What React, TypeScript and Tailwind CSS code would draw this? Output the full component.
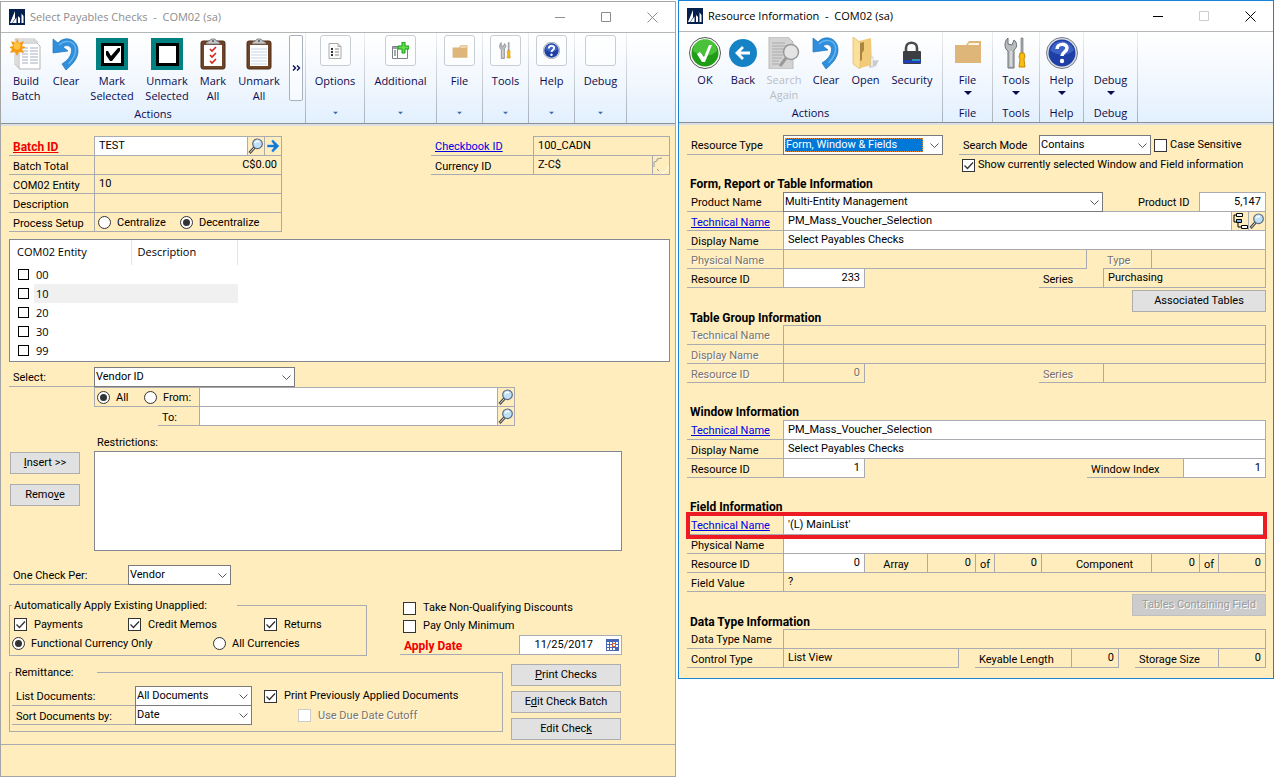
import type { ReactNode } from "react"
import clsx from "clsx"

const ENTITIES = ["00", "10", "20", "30", "99"]

/* ---------- icons ---------- */

function LogoIcon() {
  return (
    <svg width="16" height="16" viewBox="0 0 16 16" aria-hidden="true">
      <rect width="16" height="16" fill="#04204f" />
      <path d="M1 14L6 2v7.500L3 14zM3.500 14L7.500 8.500V14z" fill="#fff" />
      <path d="M9 14V7l2 2v5zM12.500 14V4.500L14.500 7v7z" fill="#fff" />
    </svg>
  )
}

function BuildIcon() {
  return (
    <svg width="32" height="32" viewBox="0 0 32 32" aria-hidden="true">
      <path d="M5 1h20v26H5z" fill="#f4f4f4" stroke="#c4c4c4" />
      <path d="M7 3h20v26H7z" fill="#f7f7f7" stroke="#c4c4c4" />
      <path d="M9 5h18l3 3v23H9z" fill="#fff" stroke="#b5b5b5" />
      <path d="M12 10h6M12 13h6M12 16h6M12 19h6M12 22h6M12 25h6M20 10h8M20 13h8M20 16h8M20 19h8M20 22h8M20 25h8" stroke="#a5afbf" />
      <path d="M7 0l2 5 5-2-2 5 4 1-4 2 2 4-5-1-2 4-2-4-5 1 2-4-3-2 4-1-2-5 5 2z" fill="#f59a12" />
      <circle cx="7" cy="8" r="3.500" fill="#ffc340" />
    </svg>
  )
}

function UndoIcon() {
  return (
    <svg width="32" height="32" viewBox="0 0 32 32" aria-hidden="true">
      <path d="M3 1v14l15-2-5-4c4-3 9-1 8.500 4-.5 6-5 10-9.500 13l4 6c7-6 12-12 12-19C28 1 15-3 8 5z" fill="#2f8fdc" stroke="#1d76bd" strokeWidth=".7" />
      <path d="M9 7c6-6 15-4 16.500 3 .8 6-2 11-7 16" fill="none" stroke="#7cc3f4" strokeWidth="1.500" opacity=".7" />
    </svg>
  )
}

function MarkIcon({ checked }: { checked?: boolean }) {
  return (
    <svg width="32" height="32" viewBox="0 0 32 32" aria-hidden="true">
      <path d="M0 0h32v32H0z" fill="#008080" />
      <path d="M6.500 6.500h20v20h-20z" fill="#fff" stroke="#000" strokeWidth="3" />
      {checked && <path d="M10 13l2 0 3 5 7-8 2 0v3l-8 10h-2l-4-6z" fill="#000" />}
    </svg>
  )
}

function ClipboardIcon({ checked }: { checked?: boolean }) {
  return (
    <svg width="26" height="32" viewBox="0 0 26 32" aria-hidden="true">
      <rect x="1" y="3" width="24" height="28" rx="2" fill="#6e4326" stroke="#4c2c16" />
      <path d="M4 7h18v21H4z" fill="#fff" />
      {checked ? (
        <path d="M10 11l2 2 4-4M10 17l2 2 4-4M10 23l2 2 4-4" fill="none" stroke="#d2271e" strokeWidth="1.600" />
      ) : (
        <path d="M5 11h16M5 14h16M5 17h16M5 20h16M5 23h16M5 26h16" stroke="#c5d6e6" />
      )}
      <path d="M6 6c0-3 4-2 5-5h4c1 3 5 2 5 5z" fill="#c3c5c8" stroke="#777" strokeWidth=".8" />
      <circle cx="13" cy="3" r="1" fill="#555" />
    </svg>
  )
}

function OptionsIcon() {
  return (
    <svg width="16" height="16" viewBox="0 0 16 16" aria-hidden="true">
      <path d="M2 .5h9l3 3v12H2z" fill="#fafafa" stroke="#aaa" />
      <path d="M11 .5v3h3" fill="none" stroke="#aaa" />
      <path d="M4 5h2v2H4zM4 8h2v2H4zM4 11h2v2H4z" fill="#333" />
      <path d="M8 6h4M8 9h4M8 12h4" stroke="#888" />
    </svg>
  )
}

function AdditionalIcon() {
  return (
    <svg width="17" height="17" viewBox="0 0 17 17" aria-hidden="true">
      <path d="M.5 4.500h15v12H.5z" fill="#fff" stroke="#7b8289" />
      <path d="M1 5h10v2H1z" fill="#9aa3aa" />
      <path d="M5.500 7v9" stroke="#7b8289" />
      <path d="M2 9h2M2 11h2M2 13h2" stroke="#555" />
      <path d="M10 0h3v4h4v3h-4v4h-3V7H6V4h4z" fill="#5fe04a" stroke="#159a14" />
    </svg>
  )
}

function FolderIcon({ size }: { size: number }) {
  return (
    <svg width={size} height={size} viewBox="0 0 28 28" aria-hidden="true">
      <path d="M1 8h11l3-4h12v22H1z" fill="#deb679" />
      <path d="M15 6h10v2H14z" fill="#fff5e3" />
    </svg>
  )
}

function ToolsIcon({ size }: { size: number }) {
  return (
    <svg width={size} height={size} viewBox="0 0 32 32" aria-hidden="true">
      <path d="M8 1L8 7 12 8 14 3c3 2 4 7 0 10v18H8V14C4 12 4 4 8 1z" fill="#b9bcbe" stroke="#6b6e70" />
      <path d="M11 14v15" stroke="#f3f3f3" />
      <path d="M21 1h2v15h-2z" fill="#a9acaf" stroke="#777" strokeWidth=".7" />
      <path d="M20 16h4l1 4-1 2 1 8h-6l1-8-1-2z" fill="#f7bd13" stroke="#c98a00" />
    </svg>
  )
}

function HelpIcon({ size }: { size: number }) {
  return (
    <svg width={size} height={size} viewBox="0 0 32 32" aria-hidden="true">
      <circle cx="16" cy="16" r="15.500" fill="#dcdfe3" stroke="#777e8a" />
      <circle cx="16" cy="16" r="13.500" fill="#1d3fa6" />
      <path d="M4 13a12.500 12.500 0 0 1 24 0c-5 6-16 7-24 0z" fill="#4a72d4" opacity=".7" />
      <path d="M11 12c0-6 10-6 10-1 0 4-5 4-5 8" fill="none" stroke="#fff" strokeWidth="3.500" />
      <circle cx="16" cy="24" r="2.200" fill="#fff" />
    </svg>
  )
}

function OkIcon() {
  return (
    <svg width="32" height="32" viewBox="0 0 32 32" aria-hidden="true">
      <circle cx="16" cy="16" r="15.500" fill="#fff" stroke="#555" />
      <circle cx="16" cy="16" r="13.500" fill="#1f9d17" />
      <path d="M4 14a12 12 0 0 1 24 0c-6 6-16 6-24 0z" fill="#5bd049" opacity=".7" />
      <path d="M8 17l3-2 4 5 5-12h3l-7 17h-3z" fill="#fff" />
    </svg>
  )
}

function BackIcon() {
  return (
    <svg width="32" height="32" viewBox="0 0 32 32" aria-hidden="true">
      <circle cx="16" cy="16" r="14" fill="#1482c5" />
      <path d="M23 16H11M16 10l-6 6 6 6" fill="none" stroke="#fff" strokeWidth="2.800" />
    </svg>
  )
}

function SearchAgainIcon() {
  return (
    <svg width="32" height="32" viewBox="0 0 32 32" aria-hidden="true">
      <path d="M1 0h19l5 5v27H1z" fill="#d3d3d3" stroke="#bbb" />
      <path d="M4 6h13M4 9h17M4 12h12M4 15h11M4 18h11M4 21h10M4 24h7M4 27h7" stroke="#aaa" />
      <circle cx="23" cy="15" r="7.500" fill="#e4e4e4" stroke="#999" strokeWidth="1.500" />
      <path d="M18 21l-6 8" stroke="#999" strokeWidth="3" />
    </svg>
  )
}

function OpenIcon() {
  return (
    <svg width="32" height="32" viewBox="0 0 32 32" aria-hidden="true">
      <path d="M20 24l9-1-3 6-7 2z" fill="#c9cdd2" />
      <path d="M9 4l12-3 1 27-12 3z" fill="#f1cb78" />
      <path d="M3 0l8 6-1 26-7-5z" fill="#fbe09b" stroke="#e3b65b" strokeWidth=".7" />
      <path d="M10 6l4-1v8l-2 3v7l-2 1z" fill="#a98542" />
      <path d="M21 20h2v10h-2z" fill="#fff" stroke="#bbb" strokeWidth=".6" />
    </svg>
  )
}

function LockIcon() {
  return (
    <svg width="32" height="32" viewBox="0 0 32 32" aria-hidden="true">
      <path d="M10 15v-4c0-7 11-7 11 0v4" fill="none" stroke="#4a4a4a" strokeWidth="2.600" />
      <rect x="7" y="14" width="18" height="13" rx="1" fill="#3b3d42" />
      <path d="M7 23h18v3H7z" fill="#1c3fb8" />
      <path d="M16 22h8v2h-8z" fill="#2c8fb5" />
    </svg>
  )
}

function LookupIcon() {
  return (
    <svg width="16" height="16" viewBox="0 0 16 16" aria-hidden="true">
      <path d="M6.500 9.500L1.500 15" stroke="#444" strokeWidth="2.800" />
      <path d="M6.500 9.500L2 14.500" stroke="#e8e8e8" />
      <circle cx="9.500" cy="5.800" r="4.800" fill="#bfe0f7" stroke="#5c6a80" strokeWidth="1.200" />
      <path d="M7 5c1-2 3-2 4-1" fill="none" stroke="#fff" strokeWidth="1.500" />
    </svg>
  )
}

function GoIcon() {
  return (
    <svg width="14" height="14" viewBox="0 0 14 14" aria-hidden="true">
      <path d="M1 5.500h6.500L5 2l2-1.500L13.500 7 7 13.500 5 12l2.500-3.500H1z" fill="#1478cf" stroke="#fff" strokeWidth=".5" />
    </svg>
  )
}

function CurrencyIcon() {
  return (
    <svg width="16" height="17" viewBox="0 0 16 17" aria-hidden="true">
      <path d="M1 10V5l3-1V2l5-1M4 12l2 2" fill="none" stroke="#9b9b9b" />
      <path d="M7 14l2 2h2l4-4V9" fill="none" stroke="#fff" />
    </svg>
  )
}

function TreeIcon() {
  return (
    <svg width="15" height="16" viewBox="0 0 15 16" aria-hidden="true">
      <path d="M4 2H1v7h3M5 10v4h3" fill="none" stroke="#000" />
      <path d="M3.500.5h6v3h-6zM8.500 12.500h6v3h-6z" fill="#fff" stroke="#000" />
      <path d="M3.500 6.500h5v3h-5z" fill="#7db5f0" stroke="#000" />
    </svg>
  )
}

function CalendarIcon() {
  return (
    <svg width="13" height="12" viewBox="0 0 13 12" aria-hidden="true">
      <path d="M0 0h13v12H0z" fill="#4967b2" />
      <path d="M1 3h2v2H1zM4 3h2v2H4zM7 3h2v2H7zM10 3h2v2h-2zM1 6h2v2H1zM4 6h2v2H4zM10 6h2v2h-2zM1 9h2v2H1zM4 9h2v2H4zM7 9h2v2H7z" fill="#fff" />
      <path d="M6.500 4.500h3v3h-3z" fill="#fff" stroke="#e2572b" />
    </svg>
  )
}

/* ---------- window chrome ---------- */

function TitleBar({ title, active }: { title: string; active?: boolean }) {
  return (
    <header
      className={clsx(
        "flex h-[31px] items-center border-b border-[#b4b6b8] bg-white pl-2 font-['Open_Sans',sans-serif] text-[11px]",
        active ? "text-black" : "text-[#8c8c8c]",
      )}
    >
      <LogoIcon />
      <h1 className="flex-1 pl-[5px] whitespace-pre">{title}</h1>
      <button type="button" aria-label="Minimize" className="flex h-[30px] w-[46px] items-center justify-center">
        <svg width="10" height="10"><path d="M0 5.500h10" stroke="currentColor" /></svg>
      </button>
      <button type="button" aria-label="Maximize" disabled={active} className="flex h-[30px] w-[46px] items-center justify-center disabled:text-[#cccccc]">
        <svg width="10" height="10"><path d="M.5.5h9v9h-9z" fill="none" stroke="currentColor" /></svg>
      </button>
      <button type="button" aria-label="Close" className="flex h-[30px] w-[46px] items-center justify-center">
        <svg width="11" height="11"><path d="M.5.5l10 10M10.500.5l-10 10" stroke="currentColor" /></svg>
      </button>
    </header>
  )
}

function Ribbon({ children }: { children: ReactNode }) {
  return (
    <div className="border-b-2 border-[#dcdfe3] bg-white">
      <div className="flex h-[91px] border-b border-[#8b9098] bg-gradient-to-b from-white via-[#f3f8fe] to-[#e2f0fe] font-['Open_Sans',sans-serif] text-[11px] leading-[15px] text-[#0b0b4f]">
        {children}
      </div>
    </div>
  )
}

function Separator() {
  return <span className="w-px bg-gradient-to-b from-[#eceef1] to-[#aab2bd]" />
}

function RibbonGroup({ label, children }: { label: string; children: ReactNode }) {
  return (
    <div className="flex flex-col">
      <div className="flex h-[73px]">{children}</div>
      <span className="text-center">{label}</span>
    </div>
  )
}

function RibbonButton({ icon, label, className, disabled }: { icon?: ReactNode; label: string; className: string; disabled?: boolean }) {
  return (
    <button type="button" disabled={disabled} className={clsx("flex flex-col items-center pt-[5px] disabled:text-[#b9bcc2]", className)}>
      <span className="flex h-[35px] items-start justify-center">{icon}</span>
      <span className="text-center">{label}</span>
    </button>
  )
}

function DropArrow({ className }: { className?: string }) {
  return (
    <svg width="8" height="4" viewBox="0 0 8 4" className={className} aria-hidden="true">
      <path d="M0 0h8L4 4z" fill="currentColor" />
    </svg>
  )
}

function CollapsedGroup({ icon, label, className }: { icon?: ReactNode; label: string; className: string }) {
  return (
    <button type="button" className={clsx("flex flex-col items-center pt-[2px]", className)}>
      <span className="flex h-[31px] w-[31px] items-center justify-center rounded-[3px] border border-[#c9ced4] bg-white/60">{icon}</span>
      <span className="mt-[7px]">{label}</span>
      <DropArrow className="mt-[23px] w-[5px] text-[#3f6bb0]" />
    </button>
  )
}

function MenuGroup({ icon, label, className }: { icon?: ReactNode; label: string; className: string }) {
  return (
    <div className={clsx("flex flex-col items-center", className)}>
      <button type="button" className="flex h-[73px] w-full flex-col items-center pt-[5px]">
        <span className="flex h-[35px] items-start justify-center">{icon}</span>
        <span>{label}</span>
        <DropArrow className="mt-[4px] text-[#0b0b4f]" />
      </button>
      <span>{label}</span>
    </div>
  )
}

/* ---------- form parts ---------- */

const DISABLED = "text-[#77726a] [text-shadow:1px_1px_0_#fff]"

interface LabelProps {
  children: ReactNode
  htmlFor?: string
  className?: string
  disabled?: boolean
}

function Label({ children, htmlFor, className, disabled }: LabelProps) {
  return (
    <label
      htmlFor={htmlFor}
      className={clsx("shrink-0 border-b border-[#a9abb0] pl-1 leading-[22px] whitespace-nowrap", disabled && DISABLED, className)}
    >
      {children}
    </label>
  )
}

function LinkLabel({ children, className }: { children: ReactNode; className?: string }) {
  return (
    <span className={clsx("shrink-0 border-b border-[#a9abb0] pl-1 leading-[22px] whitespace-nowrap", className)}>
      <a href="#" className="underline">{children}</a>
    </span>
  )
}

interface FieldProps {
  id: string
  name?: string
  value?: string
  className?: string
  right?: boolean
  muted?: boolean
  disabled?: boolean
}

function Field({ id, name, value = "", className, right, muted, disabled }: FieldProps) {
  return (
    <input
      id={id}
      aria-label={name}
      defaultValue={value}
      readOnly={muted}
      disabled={disabled}
      className={clsx(
        "min-w-0 rounded-none border-b border-l border-[#a9abb0] pt-px outline-none",
        muted || disabled ? "bg-transparent" : "bg-white",
        right ? "pr-1 text-right" : "pl-1",
        disabled && DISABLED,
        className,
      )}
    />
  )
}

interface PickProps {
  id: string
  value: string
  className: string
  focused?: boolean
}

function Pick({ id, value, className, focused }: PickProps) {
  return (
    <span className={clsx("relative flex h-[20px]", className)}>
      <select
        id={id}
        className="w-full appearance-none border border-[#7a7a7a] bg-white pl-px outline-none"
      >
        <option>{value}</option>
      </select>
      {focused && (
        <span aria-hidden="true" className="pointer-events-none absolute top-[3px] right-[20px] bottom-[3px] left-[2px] border border-dotted border-[#e08a3c] bg-[#0078d7] leading-[12px] text-white">
          {value}
        </span>
      )}
      <svg width="9" height="6" viewBox="0 0 9 6" className="pointer-events-none absolute top-[8px] right-[4px]" aria-hidden="true">
        <path d="M.5.5l4 4 4-4" fill="none" stroke="#555" />
      </svg>
    </span>
  )
}

interface TickProps {
  label: string
  checked?: boolean
  disabled?: boolean
  tight?: boolean
  className?: string
}

function Tick({ label, checked, disabled, tight, className }: TickProps) {
  return (
    <label className={clsx("flex items-center whitespace-nowrap", tight ? "gap-[3px]" : "gap-[7px]", disabled && DISABLED, className)}>
      <span className="relative h-[13px] w-[13px]">
        <input
          type="checkbox"
          defaultChecked={checked}
          disabled={disabled}
          className="peer block h-[13px] w-[13px] appearance-none border border-[#333] bg-white disabled:border-[#ccc]"
        />
        <svg width="13" height="13" className="pointer-events-none absolute inset-0 hidden peer-checked:block" aria-hidden="true">
          <path d="M2.500 6.500l3 3 5.500-6" fill="none" stroke="#333" strokeWidth="1.300" />
        </svg>
      </span>
      <span className="pt-px">{label}</span>
    </label>
  )
}

function Radio({ label, group, checked, className }: { label: string; group: string; checked?: boolean; className?: string }) {
  return (
    <label className={clsx("flex items-center gap-[6px] whitespace-nowrap", className)}>
      <span className="relative h-[13px] w-[13px]">
        <input
          type="radio"
          name={group}
          defaultChecked={checked}
          className="peer block h-[13px] w-[13px] appearance-none rounded-full border border-[#333] bg-white"
        />
        <span className="pointer-events-none absolute inset-[3px] hidden rounded-full bg-[#333] peer-checked:block" />
      </span>
      <span className="pt-[2px]">{label}</span>
    </label>
  )
}

function PushButton({ children, className, disabled }: { children: ReactNode; className: string; disabled?: boolean }) {
  return (
    <button
      type="button"
      disabled={disabled}
      className={clsx(
        "h-[22px] shrink-0 border pt-px",
        disabled ? "border-[#bfbfbf] bg-[#cccccc] text-[#9b9b9b] [text-shadow:1px_1px_0_#fff]" : "border-[#adadad] bg-[#e1e1e1]",
        className,
      )}
    >
      {children}
    </button>
  )
}

function IconCell({ label, children, last, className }: { label: string; children: ReactNode; last?: boolean; className?: string }) {
  return (
    <button
      type="button"
      aria-label={label}
      className={clsx(
        "flex shrink-0 items-center justify-center border-b border-l border-[#a9abb0]",
        last ? "w-[18px] border-r" : "w-[17px]",
        className,
      )}
    >
      {children}
    </button>
  )
}

function Heading({ children, className }: { children: ReactNode; className?: string }) {
  return <h2 className={clsx("pl-[3px] text-[12px] font-bold whitespace-nowrap", className)}>{children}</h2>
}

/* ---------- Select Payables Checks ---------- */

function PayablesWindow() {
  return (
    <section className="mt-px border border-[#a5a5a5] bg-[#ffedbe]">
      <TitleBar title="Select Payables Checks  -  COM02 (sa)" />
      <Ribbon>
        <RibbonGroup label="Actions">
          <RibbonButton icon={<BuildIcon />} label="Build Batch" className="ml-[5px] w-[40px]" />
          <RibbonButton icon={<UndoIcon />} label="Clear" className="w-[40px]" />
          <RibbonButton icon={<MarkIcon checked />} label="Mark Selected" className="w-[52px]" />
          <RibbonButton icon={<MarkIcon />} label="Unmark Selected" className="w-[58px]" />
          <RibbonButton icon={<ClipboardIcon checked />} label="Mark All" className="w-[34px]" />
          <RibbonButton icon={<ClipboardIcon />} label="Unmark All" className="mx-[5px] w-[48px]" />
          <button type="button" aria-label="More actions" className="mt-[2px] mr-[2px] ml-px flex h-[66px] w-[14px] items-center justify-center rounded-[2px] border border-[#a9b1bc] bg-white/50">
            <svg width="9" height="6" viewBox="0 0 9 6" aria-hidden="true">
              <path d="M1 .5L3.500 3 1 5.500M5 .5L7.500 3 5 5.500" fill="none" stroke="#0b0b4f" strokeWidth="1.400" />
            </svg>
          </button>
        </RibbonGroup>
        <Separator />
        <CollapsedGroup icon={<OptionsIcon />} label="Options" className="w-[58px]" />
        <Separator />
        <CollapsedGroup icon={<AdditionalIcon />} label="Additional" className="w-[71px]" />
        <Separator />
        <CollapsedGroup icon={<FolderIcon size={16} />} label="File" className="w-[45px]" />
        <Separator />
        <CollapsedGroup icon={<ToolsIcon size={17} />} label="Tools" className="w-[45px]" />
        <Separator />
        <CollapsedGroup icon={<HelpIcon size={17} />} label="Help" className="w-[45px]" />
        <Separator />
        <CollapsedGroup label="Debug" className="w-[51px]" />
        <Separator />
      </Ribbon>

      <div className="pt-[10px] pr-[5px] pl-2">
        <div className="flex items-start justify-between">
          <div className="w-[273px]">
            <div className="flex h-[20px]">
              <LinkLabel className="w-[85px] text-[12px] font-bold text-[#f00000]">Batch ID</LinkLabel>
              <Field id="batch" name="Batch ID" value="TEST" className="flex-1 border-t" />
              <IconCell label="Look up batch" className="border-t"><LookupIcon /></IconCell>
              <IconCell label="Go to batch" last className="border-t"><GoIcon /></IconCell>
            </div>
            <div className="flex h-[19px]">
              <Label htmlFor="total" className="w-[85px]">Batch Total</Label>
              <Field id="total" value="C$0.00" muted right className="flex-1 border-r" />
            </div>
            <div className="flex h-[19px]">
              <Label htmlFor="entity" className="w-[85px]">COM02 Entity</Label>
              <Field id="entity" value="10" muted className="flex-1 border-r" />
            </div>
            <div className="flex h-[19px]">
              <Label htmlFor="description" className="w-[85px]">Description</Label>
              <Field id="description" muted className="flex-1 border-r" />
            </div>
            <div className="flex h-[19px]">
              <span className="w-[85px] border-b border-[#a9abb0] pl-1 leading-[22px]">Process Setup</span>
              <div className="flex flex-1 border-x border-b border-[#a9abb0] pl-[3px]">
                <Radio group="setup" label="Centralize" className="w-[82px]" />
                <Radio group="setup" label="Decentralize" checked />
              </div>
            </div>
          </div>

          <div className="w-[239px]">
            <div className="flex h-[20px]">
              <LinkLabel className="w-[102px] text-[#0000e6]">Checkbook ID</LinkLabel>
              <Field id="checkbook" name="Checkbook ID" value="100_CADN" muted className="flex-1 border-t border-r" />
            </div>
            <div className="flex h-[19px]">
              <Label htmlFor="currency" className="w-[102px]">Currency ID</Label>
              <Field id="currency" value="Z-C$" muted className="flex-1" />
              <IconCell label="Currency" last><CurrencyIcon /></IconCell>
            </div>
          </div>
        </div>

        <div className="mt-[7px] border border-[#828790] bg-white pb-px font-['Open_Sans',sans-serif]">
          <table className="w-[228px] table-fixed border-collapse text-left">
            <thead>
              <tr className="h-[25px]">
                <th className="w-[24px] p-0" aria-label="Selected" />
                <th className="w-[97px] border-r border-[#e5e5e5] p-0 font-normal whitespace-nowrap">
                  <span className="-ml-[17px]">COM02 Entity</span>
                </th>
                <th className="border-r border-[#e5e5e5] p-0 pl-[6px] font-normal">Description</th>
              </tr>
            </thead>
            <tbody>
              {ENTITIES.map((entity) => (
                <tr key={entity} className="h-[19px]">
                  <td className="p-0 pl-2">
                    <input type="checkbox" aria-label={entity} className="block h-[11px] w-[11px] appearance-none border border-black bg-white" />
                  </td>
                  <td className={clsx("p-0 pl-[2px] leading-[17px]", entity === "10" && "bg-[#f0f0f0]")}>{entity}</td>
                  <td className={clsx("p-0", entity === "10" && "bg-[#f0f0f0]")} />
                </tr>
              ))}
            </tbody>
          </table>
        </div>

        <div className="mt-[5px] flex h-[20px]">
          <Label htmlFor="select" className="w-[85px]">Select:</Label>
          <Pick id="select" value="Vendor ID" className="w-[201px]" />
        </div>
        <div className="ml-[85px] flex h-[20px]">
          <div className="flex w-[105px] border-y border-l border-[#a9abb0] pl-[2px]">
            <Radio group="range" label="All" checked className="w-[47px]" />
            <Radio group="range" label="From:" />
          </div>
          <Field id="from" name="From" className="w-[298px] border-t" />
          <IconCell label="Look up from" last className="border-t"><LookupIcon /></IconCell>
        </div>
        <div className="ml-[149px] flex h-[19px]">
          <Label htmlFor="to" className="w-[41px]">To:</Label>
          <Field id="to" className="w-[298px]" />
          <IconCell label="Look up to" last><LookupIcon /></IconCell>
        </div>

        <div className="flex">
          <div className="flex w-[85px] flex-col gap-[10px] pt-[26px] pl-px">
            <PushButton className="w-[70px]"><u>I</u>nsert &gt;&gt;</PushButton>
            <PushButton className="w-[70px]">Remo<u>v</u>e</PushButton>
          </div>
          <div className="flex flex-col pt-[9px]">
            <label htmlFor="restrictions" className="pl-[3px] leading-[16px]">Restrictions:</label>
            <textarea id="restrictions" className="h-[100px] w-[528px] resize-none border border-[#828790] bg-white outline-none" />
          </div>
        </div>

        <div className="mt-[14px] flex h-[20px]">
          <Label htmlFor="per" className="w-[119px]">One Check Per:</Label>
          <Pick id="per" value="Vendor" className="w-[103px]" />
        </div>

        <div className="mt-[12px] flex">
          <fieldset className="w-[358px] border border-[#a9abb0] pb-[2px]">
            <legend className="ml-[2px] h-[16px] w-[225px] pl-[2px] leading-[17px]">Automatically Apply Existing Unapplied:</legend>
            <div className="flex h-[21px] pt-[2px] pl-1">
              <Tick label="Payments" checked className="w-[114px]" />
              <Tick label="Credit Memos" checked className="w-[136px]" />
              <Tick label="Returns" checked />
            </div>
            <div className="flex h-[19px] pl-[2px]">
              <Radio group="currencies" label="Functional Currency Only" checked className="w-[201px]" />
              <Radio group="currencies" label="All Currencies" />
            </div>
          </fieldset>
          <div className="ml-[33px] w-[222px] pt-[2px]">
            <Tick label="Take Non-Qualifying Discounts" className="h-[18px] pl-[3px]" />
            <Tick label="Pay Only Minimum" className="h-[18px] pl-[3px]" />
            <div className="flex h-[20px]">
              <Label htmlFor="apply" className="w-[119px] text-[12px] font-bold text-[#f00000]">Apply Date</Label>
              <span className="flex flex-1 items-center border border-[#a9abb0] bg-white pr-[2px]">
                <input id="apply" defaultValue="11/25/2017" className="w-[73px] bg-transparent text-right outline-none" />
                <button type="button" aria-label="Open calendar" className="ml-auto"><CalendarIcon /></button>
              </span>
            </div>
          </div>
        </div>

        <div className="mt-2 flex items-start gap-2">
          <fieldset className="w-[494px] border border-[#a9abb0] pb-[6px]">
            <legend className="ml-[2px] h-[16px] w-[85px] pl-[3px] leading-[17px]">Remittance:</legend>
            <div className="mt-[6px] flex h-[20px] pl-[2px]">
              <Label htmlFor="list" className="w-[123px]">List Documents:</Label>
              <Pick id="list" value="All Documents" className="w-[117px]" />
              <Tick label="Print Previously Applied Documents" checked className="ml-3" />
            </div>
            <div className="flex h-[19px] pl-[2px]">
              <Label htmlFor="sort" className="w-[123px]">Sort Documents by:</Label>
              <Pick id="sort" value="Date" className="-mt-px w-[117px]" />
              <Tick label="Use Due Date Cutoff" disabled className="ml-[46px]" />
            </div>
          </fieldset>
          <div className="flex flex-col gap-[5px]">
            <PushButton className="w-[110px]"><u>P</u>rint Checks</PushButton>
            <PushButton className="w-[110px]">E<u>d</u>it Check Batch</PushButton>
            <PushButton className="w-[110px]">Edit Chec<u>k</u></PushButton>
          </div>
        </div>
      </div>
      <footer className="mt-1 h-[32px] border-t border-[#a9abb0]" />
    </section>
  )
}

/* ---------- Resource Information ---------- */

function ResourceWindow() {
  return (
    <section className="border border-[#1883d7] bg-[#ffedbe]">
      <TitleBar title="Resource Information  -  COM02 (sa)" active />
      <Ribbon>
        <RibbonGroup label="Actions">
          <RibbonButton icon={<OkIcon />} label="OK" className="ml-2 w-[36px]" />
          <RibbonButton icon={<BackIcon />} label="Back" className="w-[40px]" />
          <RibbonButton icon={<SearchAgainIcon />} label="Search Again" disabled className="w-[42px]" />
          <RibbonButton icon={<UndoIcon />} label="Clear" className="w-[42px]" />
          <RibbonButton icon={<OpenIcon />} label="Open" className="w-[37px]" />
          <RibbonButton icon={<LockIcon />} label="Security" className="mr-[2px] w-[56px]" />
        </RibbonGroup>
        <Separator />
        <MenuGroup icon={<FolderIcon size={28} />} label="File" className="w-[49px]" />
        <Separator />
        <MenuGroup icon={<ToolsIcon size={32} />} label="Tools" className="w-[46px]" />
        <Separator />
        <MenuGroup icon={<HelpIcon size={32} />} label="Help" className="w-[43px]" />
        <Separator />
        <MenuGroup label="Debug" className="w-[53px]" />
        <Separator />
      </Ribbon>

      <div className="pt-[10px] pr-[7px] pb-[10px] pl-2">
        <div className="flex h-[20px]">
          <Label htmlFor="type" className="w-[96px]">Resource Type</Label>
          <Pick id="type" value="Form, Window & Fields" focused className="w-[160px]" />
          <Label htmlFor="mode" className="ml-4 w-[80px]">Search Mode</Label>
          <Pick id="mode" value="Contains" className="w-[112px]" />
          <Tick label="Case Sensitive" tight className="ml-[3px]" />
        </div>
        <Tick label="Show currently selected Window and Field information" checked tight className="ml-[275px] h-[20px]" />

        <Heading className="leading-[18px]">Form, Report or Table Information</Heading>
        <div className="-mt-px flex h-[20px]">
          <Label htmlFor="product" className="w-[96px]">Product Name</Label>
          <Pick id="product" value="Multi-Entity Management" className="flex-1" />
          <Label htmlFor="productId" className="w-[96px] pl-[35px]">Product ID</Label>
          <Field id="productId" value="5,147" right className="w-[67px] border-t border-r" />
        </div>
        <div className="flex h-[19px]">
          <LinkLabel className="w-[96px] text-[#0000e6]">Technical Name</LinkLabel>
          <Field id="formTech" name="Technical Name" value="PM_Mass_Voucher_Selection" className="flex-1" />
          <IconCell label="Resource tree"><TreeIcon /></IconCell>
          <IconCell label="Look up resource" last><LookupIcon /></IconCell>
        </div>
        <div className="flex h-[19px]">
          <Label htmlFor="formDisplay" className="w-[96px]">Display Name</Label>
          <Field id="formDisplay" value="Select Payables Checks" className="flex-1 border-r" />
        </div>
        <div className="flex h-[19px]">
          <Label htmlFor="formPhysical" disabled className="w-[96px]">Physical Name</Label>
          <Field id="formPhysical" disabled className="flex-1 border-r" />
          <Label htmlFor="formType" disabled className="ml-4 w-[48px]">Type</Label>
          <Field id="formType" disabled className="w-[115px] border-r" />
        </div>
        <div className="flex h-[19px]">
          <Label htmlFor="formId" className="w-[96px]">Resource ID</Label>
          <Field id="formId" value="233" right className="w-[82px] border-r" />
          <Label htmlFor="formSeries" className="ml-auto w-[64px]">Series</Label>
          <Field id="formSeries" value="Purchasing" muted className="w-[163px] border-r" />
        </div>
        <div className="mt-[2px] flex justify-end">
          <PushButton className="w-[134px]">Associated Tables</PushButton>
        </div>

        <Heading className="leading-[13px]">Table Group Information</Heading>
        <div className="flex h-[20px]">
          <Label htmlFor="groupTech" disabled className="w-[96px]">Technical Name</Label>
          <Field id="groupTech" disabled className="flex-1 border-t border-r" />
        </div>
        <div className="flex h-[19px]">
          <Label htmlFor="groupDisplay" disabled className="w-[96px]">Display Name</Label>
          <Field id="groupDisplay" disabled className="flex-1 border-r" />
        </div>
        <div className="flex h-[19px]">
          <Label htmlFor="groupId" disabled className="w-[96px]">Resource ID</Label>
          <Field id="groupId" value="0" right disabled className="w-[82px] border-r" />
          <Label htmlFor="groupSeries" disabled className="ml-auto w-[64px]">Series</Label>
          <Field id="groupSeries" disabled className="w-[163px] border-r" />
        </div>

        <Heading className="mt-[21px] leading-[16px]">Window Information</Heading>
        <div className="flex h-[20px]">
          <LinkLabel className="w-[96px] text-[#0000e6]">Technical Name</LinkLabel>
          <Field id="winTech" name="Technical Name" value="PM_Mass_Voucher_Selection" className="flex-1 border-t border-r" />
        </div>
        <div className="flex h-[19px]">
          <Label htmlFor="winDisplay" className="w-[96px]">Display Name</Label>
          <Field id="winDisplay" value="Select Payables Checks" className="flex-1 border-r" />
        </div>
        <div className="flex h-[19px]">
          <Label htmlFor="winId" className="w-[96px]">Resource ID</Label>
          <Field id="winId" value="1" right className="w-[82px] border-r" />
          <Label htmlFor="winIndex" className="ml-auto w-[96px]">Window Index</Label>
          <Field id="winIndex" value="1" right className="w-[83px] border-r" />
        </div>

        <Heading className="mt-[21px] leading-[16px]">Field Information</Heading>
        <div className="relative flex h-[20px]">
          <LinkLabel className="w-[96px] text-[#0000e6]">Technical Name</LinkLabel>
          <Field id="fieldTech" name="Technical Name" value="'(L) MainList'" className="flex-1 border-t border-r" />
          <span className="pointer-events-none absolute -inset-x-px -top-[3px] -bottom-1 border-4 border-[#ed1c24]" />
        </div>
        <div className="flex h-[19px]">
          <Label htmlFor="fieldPhysical" className="w-[96px]">Physical Name</Label>
          <Field id="fieldPhysical" className="flex-1 border-r" />
        </div>
        <div className="flex h-[19px]">
          <Label htmlFor="fieldId" className="w-[96px]">Resource ID</Label>
          <Field id="fieldId" value="0" right className="w-[82px] border-r" />
          <Label htmlFor="array" className="w-[62px] pr-1 text-center">Array</Label>
          <Field id="array" value="0" right muted className="w-[48px]" />
          <Label htmlFor="arrayOf" className="w-[19px] border-l">of</Label>
          <Field id="arrayOf" value="0" right muted className="w-[47px]" />
          <Label htmlFor="component" className="flex-1 border-l pl-4 text-center">Component</Label>
          <Field id="component" value="0" right muted className="w-[48px]" />
          <Label htmlFor="componentOf" className="w-[19px] border-l">of</Label>
          <Field id="componentOf" value="0" right muted className="w-[48px] border-r" />
        </div>
        <div className="flex h-[19px]">
          <Label htmlFor="fieldValue" className="w-[96px]">Field Value</Label>
          <Field id="fieldValue" value="?" muted className="flex-1 border-r" />
        </div>
        <div className="mt-[2px] flex justify-end">
          <PushButton disabled className="w-[134px]">Tables Containing Field</PushButton>
        </div>

        <Heading className="leading-[13px]">Data Type Information</Heading>
        <div className="flex h-[20px]">
          <Label htmlFor="dataType" className="w-[96px]">Data Type Name</Label>
          <Field id="dataType" muted className="flex-1 border-t border-r" />
        </div>
        <div className="flex h-[19px]">
          <Label htmlFor="control" className="w-[96px]">Control Type</Label>
          <Field id="control" value="List View" muted className="flex-1 border-r" />
          <Label htmlFor="keyable" className="ml-4 w-[96px]">Keyable Length</Label>
          <Field id="keyable" value="0" right muted className="w-[48px] border-r" />
          <Label htmlFor="storage" className="ml-4 w-[83px]">Storage Size</Label>
          <Field id="storage" value="0" right muted className="w-[48px] border-r" />
        </div>
      </div>
    </section>
  )
}

export default function App() {
  return (
    <main className="grid min-h-screen grid-cols-[676fr_596fr] items-start gap-[2px] bg-white font-[Roboto,sans-serif] text-[11px] text-black">
      <PayablesWindow />
      <ResourceWindow />
    </main>
  )
}
